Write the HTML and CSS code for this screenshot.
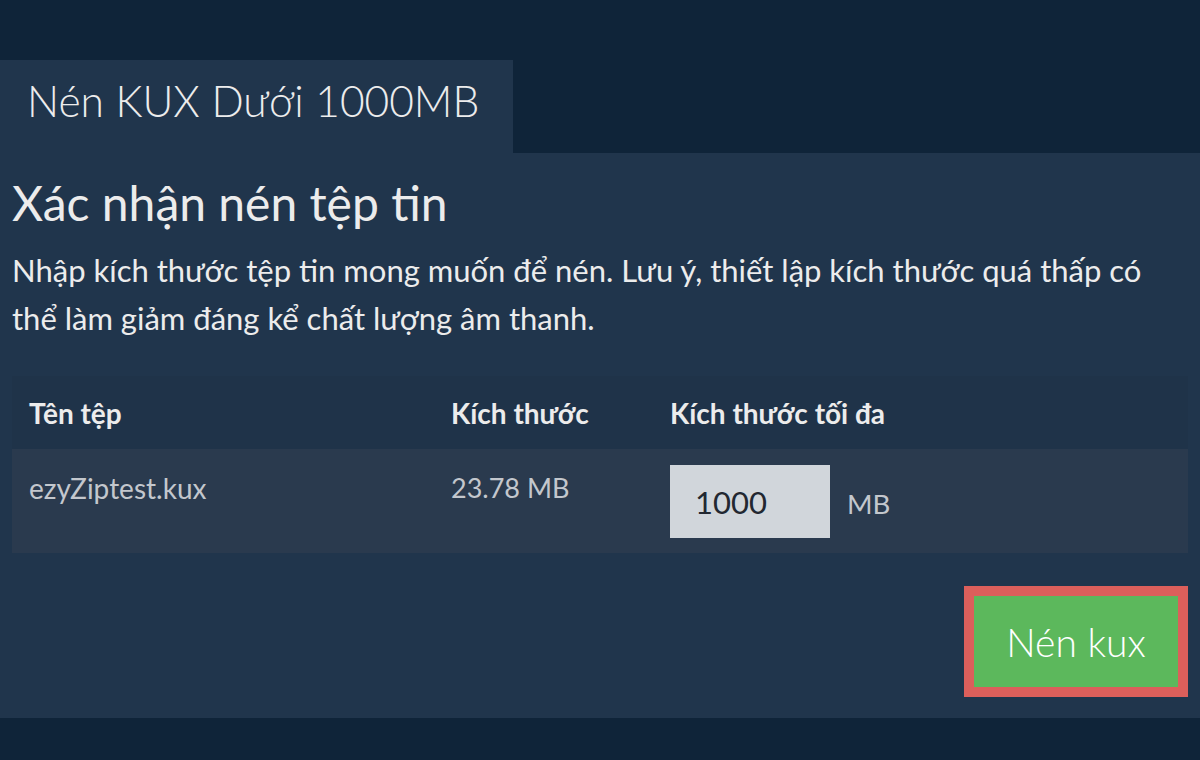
FILE: index.html
```html
<!DOCTYPE html>
<html lang="vi">
<head>
<meta charset="utf-8">
<title>Nén KUX Dưới 1000MB</title>
<link rel="stylesheet" href="styles.css">
</head>
<body>
<div class="page">
  <div class="tab">Nén KUX Dưới 1000MB</div>
  <section class="panel">
    <h1 class="title">Xác nhận nén tệp tin</h1>
    <p class="desc">Nhập kích thước tệp tin mong muốn để nén. Lưu ý, thiết lập kích thước quá thấp có thể làm giảm đáng kể chất lượng âm thanh.</p>
    <div class="table">
      <div class="row head">
        <div class="cell c1">Tên tệp</div>
        <div class="cell c2">Kích thước</div>
        <div class="cell c3">Kích thước tối đa</div>
      </div>
      <div class="row body">
        <div class="cell c1">ezyZiptest.kux</div>
        <div class="cell c2">23.78 MB</div>
        <div class="cell c3 inputcell">
          <input class="size" type="text" value="1000">
          <span class="unit">MB</span>
        </div>
      </div>
    </div>
    <div class="actions">
      <button class="btn">Nén kux</button>
    </div>
  </section>
</div>
</body>
</html>
```
FILE: styles.css
```css
html, body {
  margin: 0;
  padding: 0;
  background: #0f2439;
  font-family: Lato, "Noto Sans", sans-serif;
  color: #ececec;
}
.page {
  padding-top: 60px;
  height: 760px;
  box-sizing: border-box;
}
.tab {
  width: 513px;
  height: 93px;
  box-sizing: border-box;
  background: #20354c;
  font-weight: 300;
  font-size: 42.5px;
  padding-left: 27px;
  line-height: 81px;
  color: #ececec;
  white-space: nowrap;
}
.panel {
  background: #20354c;
  padding: 20px 12px 20px 12px;
  height: 565px;
  box-sizing: border-box;
}
.title {
  margin: 0;
  font-weight: 400;
  font-size: 48px;
  line-height: 60px;
  color: #ececec;
}
.desc {
  margin: 13px 0 0 0;
  font-size: 31px;
  line-height: 48px;
  color: #ececec;
}
.table {
  margin-top: 34px;
}
.row {
  display: flex;
}
.row.head {
  background: #1f3349;
  height: 73px;
  align-items: center;
  font-weight: 700;
  font-size: 28px;
  color: #ececec;
}
.row.body {
  background: #2a3a4e;
  height: 104px;
  font-size: 28px;
  color: #c3c7cd;
}
.cell {
  box-sizing: border-box;
}
.c1 { width: 439px; padding-left: 17px; }
.c2 { width: 219px; }
.c3 { flex: 1; }
.row.body .c1, .row.body .c2 { padding-top: 22px; }
.row.body .c2 { font-size: 27px; }
.inputcell {
  display: flex;
  align-items: center;
  padding-top: 16px;
  align-self: flex-start;
}
.size {
  width: 160px;
  height: 73px;
  box-sizing: border-box;
  border: none;
  background: #d1d6db;
  font-family: Lato, "Noto Sans", sans-serif;
  font-size: 31px;
  color: #222831;
  padding: 0 0 0 25px;
  margin: 0;
  outline: none;
}
.unit {
  margin-left: 17px;
  font-size: 27.5px;
  color: #c3c7cd;
  padding-top: 4px;
}
.actions {
  display: flex;
  justify-content: flex-end;
  margin-top: 33px;
}
.btn {
  width: 224px;
  height: 111px;
  box-sizing: border-box;
  background: #5cb85c;
  border: 10px solid #dc5f5b;
  color: #ffffff;
  font-family: Lato, "Noto Sans", sans-serif;
  font-weight: 300;
  font-size: 39px;
  padding: 0;
  cursor: pointer;
}
```
